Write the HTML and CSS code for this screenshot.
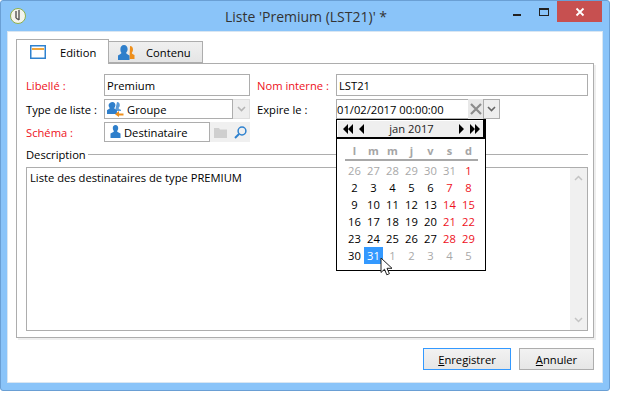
FILE: index.html
```html
<!DOCTYPE html>
<html lang="fr">
<head>
  <meta charset="UTF-8" />
  <title>Liste 'Premium (LST21)' *</title>
  <link rel="stylesheet" href="styles.css">
</head>
<body>
  <div class="window">
    <div class="titlebar">
      <svg class="app-icon" width="18" height="18" viewBox="0 0 18 18">
        <circle cx="9" cy="9" r="7.5" fill="#f4f4ec" stroke="#8fb04a"/>
        <path d="M7 4v7M10 3v10M7 11l3 2" fill="none" stroke="#555" stroke-width="1.4"/>
      </svg>
      <div class="title">Liste 'Premium (LST21)' *</div>
      <div class="controls">
        <span class="ctl-min"></span>
        <span class="ctl-max"></span>
        <span class="ctl-close">
          <svg width="10" height="10" viewBox="0 0 10 10"><path d="M1.5 1.5l7 7M8.5 1.5l-7 7" stroke="#fff" stroke-width="1.8"/></svg>
        </span>
      </div>
    </div>

    <div class="content">
      <div class="tabs">
        <div class="tab active">
          <svg width="16" height="14" viewBox="0 0 16 14">
            <rect x="0.75" y="0.75" width="14.5" height="12.5" fill="#fff" stroke="#2f82cf" stroke-width="1.5"/>
            <rect x="2" y="3" width="12" height="2" fill="#f0a63c"/>
          </svg>
          <span>Edition</span>
        </div>
        <div class="tab">
          <svg width="17" height="15" viewBox="0 0 17 15">
            <path d="M12 1c2 0 3 1.600 3 3.500 0 1.500-.6 2.600-1.200 3.300 0 1 1.200 1.400 2.700 2.200V14h-5z" fill="#ee8f1c"/>
            <path d="M6 0c2.300 0 3.600 1.800 3.600 4 0 1.700-.7 3-1.500 3.800 0 1.100 1.500 1.600 3.400 2.600V15H0v-4.600c1.900-1 3.400-1.500 3.400-2.600C2.600 7 2.400 5.700 2.400 4 2.400 1.800 3.700 0 6 0z" fill="#2f7fcb"/>
          </svg>
          <span>Contenu</span>
        </div>
      </div>

      <div class="panel">
        <div class="form-grid">
          <label class="req">Libellé :</label>
          <div class="field tall"><span>Premium</span></div>
          <label class="req">Nom interne :</label>
          <div class="field tall"><span>LST21</span></div>

          <label>Type de liste :</label>
          <div class="combo">
            <div class="field grow">
              <svg width="17" height="16" viewBox="0 0 17 16">
                <path d="M10 1c1.700 0 2.800 1.300 2.800 3 0 1.300-.5 2.300-1.200 2.900 0 .8 1 1.200 2.400 1.900v1.200H8z" fill="#5b9bd8"/>
                <path d="M5.500 1C7.300 1 8.400 2.400 8.400 4.100c0 1.300-.6 2.400-1.200 3 0 .9 1.200 1.300 2.700 2.100V13H0V9.200c1.500-.8 2.800-1.200 2.800-2.100-.7-.6-1.200-1.700-1.200-3C1.600 2.400 3.700 1 5.500 1z" fill="#2f7fcb"/>
                <path d="M16.500 12.500H12V10l-4 3.200 4 2.800v-1.500h4.500z" fill="#ee8f1c"/>
              </svg>
              <span>Groupe</span>
            </div>
            <div class="drop disabled"><svg width="9" height="6" viewBox="0 0 9 6"><path d="M1 1l3.500 3.500L8 1" fill="none" stroke="#b5b5b5" stroke-width="1.600"/></svg></div>
          </div>
          <label>Expire le :</label>
          <div class="date-row">
            <div class="field date"><span>01/02/2017 00:00:00</span></div>
            <div class="clear"><svg width="12" height="12" viewBox="0 0 12 12"><path d="M1 1l10 10M11 1L1 11" stroke="#8c8c8c" stroke-width="2.200"/></svg></div>
            <div class="drop"><svg width="9" height="6" viewBox="0 0 9 6"><path d="M1 1l3.500 3.500L8 1" fill="none" stroke="#666" stroke-width="1.600"/></svg></div>
          </div>

          <label class="req">Schéma :</label>
          <div class="combo">
            <div class="field grow">
              <svg class="person" width="11" height="14" viewBox="0 0 11 14">
                <path d="M5.500 0C7.300 0 8.200 1.400 8.200 3c0 1.300-.5 2.300-1.100 3 0 1 1.400 1.300 3.400 2.500V13H.5V8.500C2.500 7.300 3.900 7 3.900 6 3.300 5.300 2.800 4.300 2.800 3 2.800 1.400 3.700 0 5.500 0z" fill="#2f7fcb"/>
              </svg>
              <span>Destinataire</span>
            </div>
            <div class="pick">
              <svg width="13" height="11" viewBox="0 0 13 11"><path d="M0 1h5l1 1.500h7V11H0z" fill="#cfcfcf"/></svg>
            </div>
            <div class="pick">
              <svg width="13" height="13" viewBox="0 0 13 13"><circle cx="8" cy="5" r="3.900" fill="none" stroke="#2f82cf" stroke-width="1.500"/><path d="M5 8l-4 4" stroke="#2f82cf" stroke-width="2"/></svg>
            </div>
          </div>
        </div>

        <div class="desc-legend"><span>Description</span></div>
        <div class="desc-box">
          <div class="desc-text">Liste des destinataires de type PREMIUM</div>
          <div class="scrollbar">
            <svg width="9" height="6" viewBox="0 0 9 6"><path d="M1 5l3.500-3.500L8 5" fill="none" stroke="#c4c4c4" stroke-width="1.500"/></svg>
            <svg width="9" height="6" viewBox="0 0 9 6"><path d="M1 1l3.500 3.500L8 1" fill="none" stroke="#c4c4c4" stroke-width="1.500"/></svg>
          </div>
        </div>

        <div class="calendar">
          <div class="cal-head">
            <span class="cal-nav">
              <svg width="26" height="10" viewBox="0 0 26 10"><path d="M5 0v10L0 5zM10 0v10L5 5zM21 0v10l-5-5z" fill="#000"/></svg>
            </span>
            <span class="cal-month">jan 2017</span>
            <span class="cal-nav">
              <svg width="26" height="10" viewBox="0 0 26 10"><path d="M5 0v10l5-5zM16 0v10l5-5zM21 0v10l5-5z" fill="#000"/></svg>
            </span>
          </div>
          <div class="cal-days">
            <b>l</b><b>m</b><b>m</b><b>j</b><b>v</b><b>s</b><b>d</b>
          </div>
          <div class="cal-grid">
            <i>26</i><i>27</i><i>28</i><i>29</i><i>30</i><i>31</i><em>1</em>
            <span>2</span><span>3</span><span>4</span><span>5</span><span>6</span><em>7</em><em>8</em>
            <span>9</span><span>10</span><span>11</span><span>12</span><span>13</span><em>14</em><em>15</em>
            <span>16</span><span>17</span><span>18</span><span>19</span><span>20</span><em>21</em><em>22</em>
            <span>23</span><span>24</span><span>25</span><span>26</span><span>27</span><em>28</em><em>29</em>
            <span>30</span><span class="today">31</span><i>1</i><i>2</i><i>3</i><i>4</i><i>5</i>
          </div>
          <svg class="cursor" width="13" height="20" viewBox="0 0 13 20">
            <path d="M1 1v14.500l3.500-3.300 2.300 5.600 2.600-1.100-2.400-5.400H12z" fill="#fff" stroke="#222" stroke-width="1"/>
          </svg>
        </div>
      </div>

      <div class="actions">
        <button class="btn primary"><u>E</u>nregistrer</button>
        <button class="btn"><u>A</u>nnuler</button>
      </div>
    </div>
  </div>
</body>
</html>
```

FILE: styles.css
```css
html, body {
  margin: 0;
  padding: 0;
  background: #fff;
}

body {
  font-family: 'Open Sans', 'Noto Sans', sans-serif;
  font-size: 11.2px;
  color: #000;
  height: 419px;
  overflow: hidden;
}

.window {
  width: 610px;
  height: 391px;
  box-sizing: border-box;
  background: #8ac4f9;
  border: 1px solid #6a9fd4;
  border-radius: 3px;
  padding: 0 6px 7px 6px;
  display: flex;
  flex-direction: column;
}

/* title bar */
.titlebar {
  height: 30px;
  flex: none;
  display: flex;
  align-items: center;
  position: relative;
}

.app-icon {
  margin: 0 0 0 2px;
}

.title {
  flex: 1;
  text-align: center;
  font-size: 14px;
  color: #333;
  padding-right: 18px;
}

.controls {
  position: absolute;
  right: 1px;
  top: 0;
  display: flex;
  align-items: flex-start;
}

.ctl-min {
  width: 8px;
  height: 2px;
  background: #222;
  margin: 13px 18px 0 0;
}

.ctl-max {
  width: 8px;
  height: 5px;
  border: 1px solid #222;
  border-top-width: 2px;
  margin: 7px 8px 0 0;
}

.ctl-close {
  width: 45px;
  height: 21px;
  background: #c75050;
  display: flex;
  align-items: center;
  justify-content: center;
}

/* client area */
.content {
  flex: 1;
  background: #fff;
  border: 1px solid #d9e6f2;
  padding: 7px 8px 0 8px;
  display: flex;
  flex-direction: column;
}

.tabs {
  display: flex;
  align-items: flex-end;
  height: 25px;
  flex: none;
  position: relative;
  z-index: 1;
  margin-bottom: -1px;
}

.tab {
  height: 22px;
  box-sizing: border-box;
  border: 1px solid #adadad;
  border-left: 0;
  background: linear-gradient(#f0f0f0, #e5e5e5);
  display: flex;
  align-items: center;
  gap: 11px;
  padding: 0 10px 0 9px;
  width: 94px;
  margin-bottom: 1px;
}

.tab.active {
  height: 25px;
  width: 93px;
  border-left: 1px solid #adadad;
  border-bottom: 0;
  background: #fff;
  gap: 14px;
  padding-left: 13px;
  margin-bottom: 0;
}

.panel {
  flex: 1;
  position: relative;
  border: 1px solid #adadad;
  box-shadow: 2px 2px 0 #eee;
  padding: 10px 5px 6px 9px;
  display: flex;
  flex-direction: column;
  min-height: 0;
}

.form-grid {
  display: grid;
  grid-template-columns: 78px 146px 86px 1fr;
  row-gap: 3px;
  grid-template-rows: 22px 20px 20px;
  align-items: center;
}

.form-grid label {
  white-space: nowrap;
}

.form-grid label:nth-of-type(even) {
  padding-left: 7px;
}

.req {
  color: #ee1122;
}

.field {
  box-sizing: border-box;
  height: 20px;
  border: 1px solid #adadad;
  background: #fff;
  display: flex;
  align-items: center;
  padding: 0 2px;
  gap: 3px;
}

.field.tall {
  height: 22px;
}

.combo,
.date-row {
  display: flex;
  height: 20px;
}

.grow {
  flex: 1;
  min-width: 0;
}

.drop {
  box-sizing: border-box;
  width: 17px;
  height: 20px;
  border: 1px solid #adadad;
  background: #eee;
  display: flex;
  align-items: center;
  justify-content: center;
}

.drop.disabled {
  border: 1px solid #dedede;
  border-left: 0;
}

.pick {
  width: 20px;
  height: 20px;
  background: #f0f0f0;
  display: flex;
  align-items: center;
  justify-content: center;
}

.person {
  margin-left: 3px;
}

.date {
  width: 132px;
  padding: 0;
  border-right: 0;
}

.clear {
  width: 15px;
  height: 20px;
  background: #e8e8e8;
  display: flex;
  align-items: center;
  justify-content: center;
}

/* description */
.desc-legend {
  display: flex;
  align-items: center;
  gap: 2px;
  height: 14px;
  margin-top: 5px;
  margin-bottom: 6px;
}

.desc-legend::after {
  content: "";
  flex: 1;
  border-top: 1px solid #adadad;
}

.desc-box {
  flex: 1;
  box-sizing: border-box;
  border: 1px solid #adadad;
  display: flex;
  min-height: 0;
}

.desc-text {
  flex: 1;
  padding: 2px 3px;
}

.scrollbar {
  width: 17px;
  background: #f0f0f0;
  display: flex;
  flex-direction: column;
  align-items: center;
  justify-content: space-between;
  padding: 7px 0;
}

/* calendar popup */
.calendar {
  position: absolute;
  left: 319px;
  top: 55px;
  width: 150px;
  height: 152px;
  box-sizing: border-box;
  background: #fff;
  border: 1px solid #000;
  border-top: 0;
}

.cal-head {
  height: 20px;
  box-sizing: border-box;
  background: #efefef;
  border-top: 1px solid #000;
  border-bottom: 2px solid #000;
  border-right: 2px solid #000;
  box-shadow: inset 1px 1px 0 #fff;
  display: flex;
  align-items: center;
  justify-content: space-between;
  padding: 0 3px 0 6px;
}

.cal-month {
  color: #222;
}

.cal-nav {
  display: flex;
}

.cal-days,
.cal-grid {
  display: grid;
  grid-template-columns: repeat(7, 19px);
  padding-left: 8px;
  text-align: center;
}

.cal-days {
  height: 16px;
  line-height: 15px;
  border-bottom: 2px solid #a8a8a8;
  margin: 4px 6px 0 8px;
  padding: 0;
  width: 133px;
}

.cal-days b {
  color: #a5a5a5;
  font-weight: 700;
  font-size: 11px;
}

.cal-grid {
  grid-auto-rows: 17px;
  line-height: 17px;
  margin-top: 1px;
}

.cal-grid i {
  font-style: normal;
  color: #a8a8a8;
}

.cal-grid em {
  font-style: normal;
  color: #ee1122;
}

.cal-grid .today {
  background: #3399ff;
  color: #fff;
}

.cursor {
  position: absolute;
  left: 43px;
  top: 138px;
}

/* bottom buttons */
.actions {
  display: flex;
  justify-content: flex-end;
  gap: 8px;
  height: 44px;
  flex: none;
  align-items: flex-start;
  padding: 10px 0 0;
  box-sizing: border-box;
}

.btn {
  font: inherit;
  color: #000;
  height: 22px;
  padding: 0;
  border: 1px solid #adadad;
  background: linear-gradient(#f2f2f2, #e6e6e6);
  width: 75px;
}

.btn.primary {
  width: 88px;
  border-color: #3399ff;
}
```
